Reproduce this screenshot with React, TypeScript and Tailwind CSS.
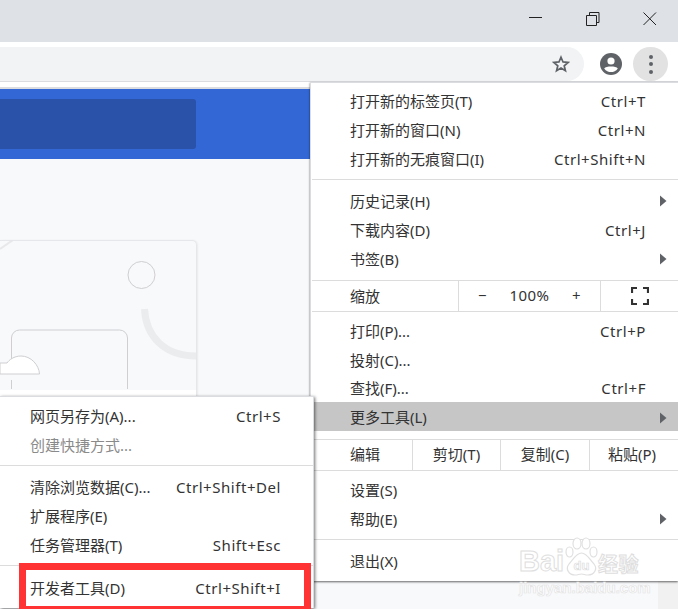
const font = "[font-family:'Noto_Sans','Noto_Sans_CJK_SC',sans-serif]";

function Arrow() {
  return (
    <svg width="7" height="12" viewBox="0 0 7 12" className="shrink-0">
      <path d="M0 0.5 L6.5 6 L0 11.5 Z" fill="#5f6368" />
    </svg>
  );
}

function Row({ label, shortcut, arrow, h = "h-[29px]", cls = "pb-[1px]" }: { label: string; shortcut?: string; arrow?: boolean; h?: string; cls?: string }) {
  return (
    <div className={`flex items-center justify-between pl-[39px] ${arrow ? "pr-[11px]" : "pr-[32px]"} ${h} ${cls}`}>
      <span>{label}</span>
      {shortcut && <span className="tracking-[0.55px]">{shortcut}</span>}
      {arrow && <Arrow />}
    </div>
  );
}

function SubRow({ label, shortcut, muted }: { label: string; shortcut?: string; muted?: boolean }) {
  return (
    <div className={`flex items-center justify-between pl-[30px] pr-[32px] pb-[3px] h-[29px] ${muted ? "text-[#8a8a8a]" : ""}`}>
      <span>{label}</span>
      {shortcut && <span className="tracking-[0.55px]">{shortcut}</span>}
    </div>
  );
}

function Sep({ cls }: { cls: string }) {
  return <div className={`h-px bg-[#dcdcdc] ml-[1px] ${cls}`} />;
}

function Watermark() {
  return (
    <div className="absolute left-[519px] top-[536px] w-[125px] h-[60px] pointer-events-none">
      <div className="flex items-end h-[40px]">
        <span className="[font-family:'Liberation_Sans',sans-serif] font-bold text-[29px] leading-[29px] w-[46px] text-white [-webkit-text-stroke:1px_#dedede]">Bai</span>
        <svg width="33" height="39" viewBox="0 0 33 39" className="shrink-0">
          <g fill="#ffffff" stroke="#e0e0e0" strokeWidth="1.2">
            <ellipse cx="4.5" cy="15" rx="3.5" ry="5" />
            <ellipse cx="12" cy="6.5" rx="4" ry="5.5" />
            <ellipse cx="21" cy="6.5" rx="4" ry="5.5" />
            <ellipse cx="28.5" cy="15" rx="3.5" ry="5" />
            <path d="M16.5 16 C22 16 25 23 29 27 C33 32 29 38 23 38 C20 38 19 37 16.5 37 C14 37 13 38 10 38 C4 38 0 32 4 27 C8 23 11 16 16.5 16 Z" />
          </g>
          <text x="16.5" y="33" textAnchor="middle" fontSize="13" fontFamily="Liberation Sans" fontWeight="700" fill="#ffffff" stroke="#dcdcdc" strokeWidth="0.7">du</text>
        </svg>
        <span className="[font-family:'Noto_Sans_CJK_SC',sans-serif] font-bold text-[20px] leading-[24px] tracking-[0.5px] text-white [-webkit-text-stroke:1px_#dedede] whitespace-nowrap">经验</span>
      </div>
      <div className="[font-family:'Liberation_Sans',sans-serif] font-bold text-[15px] leading-[16px] mt-[4px] text-white [-webkit-text-stroke:0.7px_#e4e4e4] whitespace-nowrap">jingyan.baidu.com</div>
    </div>
  );
}

export default function App() {
  return (
    <div className={`relative w-[678px] h-[609px] overflow-hidden flex flex-col bg-white text-[15px] text-[#333333] ${font}`}>
      {/* window title bar */}
      <div className="h-[42px] shrink-0 bg-[#dee1e6] flex justify-end items-start">
        <svg width="678" height="42" viewBox="0 0 678 42" className="shrink-0">
          <g fill="none" stroke="#222" strokeWidth="1">
            <path d="M529 17.5 H542" />
            <path d="M586.5 15.5 H596.5 V25.5 H586.5 Z" />
            <path d="M589.5 15 V12.5 H599 V22.5 H597" />
            <path d="M643.5 12.5 L656 25 M656 12.5 L643.5 25" />
          </g>
        </svg>
      </div>
      {/* toolbar */}
      <div className="h-[40px] shrink-0 bg-white border-b border-[#dadce0] flex items-start pt-[5px]">
        <div className="w-[584px] h-[34px] bg-[#f1f3f4] rounded-r-[17px] flex items-center justify-end pr-[14px]">
          <svg width="18" height="18" viewBox="0 0 24 24" fill="none" stroke="#5f6368" strokeWidth="2.3" strokeLinejoin="miter">
            <path d="M12 3 L14.7 9.3 L21.5 9.9 L16.3 14.4 L17.9 21 L12 17.5 L6.1 21 L7.7 14.4 L2.5 9.9 L9.3 9.3 Z" />
          </svg>
        </div>
        <div className="ml-[16px] mt-[6px] w-[22px] h-[22px] shrink-0">
          <svg width="22" height="22" viewBox="0 0 22 22">
            <circle cx="11" cy="11" r="11" fill="#5f6368" />
            <circle cx="11" cy="8" r="3.6" fill="#fff" />
            <path d="M4.2 15.4 C6 12.8 16 12.8 17.8 15.4 C16 18 13.5 19 11 19 C8.5 19 6 18 4.2 15.4 Z" fill="#fff" />
          </svg>
        </div>
        <div className="ml-[11px] w-[35px] h-[34px] rounded-full bg-[#e2e2e2] flex flex-col items-center justify-center gap-[3.5px] shrink-0">
          <span className="w-[4px] h-[4px] rounded-full bg-[#5f6368]" />
          <span className="w-[4px] h-[4px] rounded-full bg-[#5f6368]" />
          <span className="w-[4px] h-[4px] rounded-full bg-[#5f6368]" />
        </div>
      </div>
      {/* gap and hairline above the page */}
      <div className="h-[7px] shrink-0 bg-white border-b-2 border-[#dadce0]" />
      {/* page header */}
      <div className="h-[70px] shrink-0 bg-[#3367d6] pt-[10px]">
        <div className="w-[196px] h-[50px] bg-[#2a52a8] rounded-r-[3px]" />
      </div>
      {/* page body */}
      <div className="flex-1 flex bg-[#f8f9fb] min-h-0">
        <div className="flex-1 pt-[81px]">
          <div className="w-[197px] h-[170px] border-t border-r border-[#e6e7ea] rounded-tr-[5px] shadow-[1px_0_2px_rgba(0,0,0,0.06)] overflow-hidden">
            <svg width="196" height="149" viewBox="0 0 196 149" className="block">
              <path d="M0 8 L13 -1" stroke="#e8e8ea" strokeWidth="2" fill="none" />
              <circle cx="141.5" cy="34" r="13.5" fill="none" stroke="#cfcfd2" strokeWidth="1" />
              <path d="M144.5 68 C146 96 165 115 196 115" fill="none" stroke="#ebecee" strokeWidth="7" />
              <path d="M11.5 149 V98 A8 8 0 0 1 19.5 90 H119.5 A8 8 0 0 1 127.5 98 V149" fill="none" stroke="#cfcfd2" strokeWidth="1" transform="translate(0,-1)" />
              <rect x="5" y="122" width="13" height="17" fill="#f8f9fb" />
              <path d="M0 133 H39.5 C39 124 31 115 21 115 C14 115 9 119 7 122 H0 Z" fill="#ffffff" stroke="#cfcfd2" strokeWidth="1" />
            </svg>
            <div className="h-[21px] bg-white" />
          </div>
        </div>
        <div className="w-[20px] shrink-0 bg-[#f1f1f1]" />
      </div>

      {/* main dropdown */}
      <div className="absolute left-[310px] top-[82px] w-[368px] h-[499px] bg-white border-l border-t border-[#dadce0] shadow-[0_1px_2px_rgba(0,0,0,0.6)] pt-[4px]">
        <Row label="打开新的标签页(T)" shortcut="Ctrl+T" />
        <Row label="打开新的窗口(N)" shortcut="Ctrl+N" />
        <Row label="打开新的无痕窗口(I)" shortcut="Ctrl+Shift+N" />
        <Sep cls="mt-[5px] mb-[7px]" />
        <Row label="历史记录(H)" arrow />
        <Row label="下载内容(D)" shortcut="Ctrl+J" />
        <Row label="书签(B)" arrow />
        <Sep cls="mt-[6px]" />
        <div className="flex h-[30px]">
          <div className="w-[148px] border-r border-[#dcdcdc] pl-[39px] flex items-center">缩放</div>
          <div className="w-[142px] border-r border-[#dcdcdc] pb-[1px] flex items-center tracking-[0.4px]">
            <span className="w-[47px] text-center">−</span>
            <span className="w-[47px] text-center">100%</span>
            <span className="w-[47px] text-center">+</span>
          </div>
          <div className="flex-1 flex items-center justify-center">
            <svg width="18" height="18" viewBox="0 0 18 18" fill="none" stroke="#333" strokeWidth="2.2">
              <path d="M1 6 V1 H6 M12 1 H17 V6 M17 12 V17 H12 M6 17 H1 V12" />
            </svg>
          </div>
        </div>
        <Sep cls="mb-[5px]" />
        <Row label="打印(P)..." shortcut="Ctrl+P" />
        <Row label="投射(C)..." />
        <Row label="查找(F)..." shortcut="Ctrl+F" h="h-[27px]" />
        <Row label="更多工具(L)" arrow cls="bg-[#c6c6c6] pt-[2px]" />
        <Sep cls="mt-[8px]" />
        <div className="flex h-[30px]">
          <div className="w-[102px] border-r border-[#dcdcdc] pl-[39px] pb-[1px] flex items-center">编辑</div>
          <div className="w-[88px] border-r border-[#dcdcdc] pb-[1px] flex items-center justify-center">剪切(T)</div>
          <div className="w-[89px] border-r border-[#dcdcdc] pb-[1px] flex items-center justify-center">复制(C)</div>
          <div className="flex-1 flex items-center justify-center pb-[1px] pr-[4px]">粘贴(P)</div>
        </div>
        <Sep cls="mb-[5px]" />
        <Row label="设置(S)" />
        <Row label="帮助(E)" arrow />
        <Sep cls="mt-[5px] mb-[7px]" />
        <Row label="退出(X)" />
      </div>

      {/* more tools submenu */}
      <div className="absolute left-0 top-[396px] w-[314px] h-[212px] bg-white border-t border-r border-[#dadce0] shadow-[1px_1px_3px_rgba(0,0,0,0.55)] pt-[6px]">
        <SubRow label="网页另存为(A)..." shortcut="Ctrl+S" />
        <SubRow label="创建快捷方式..." muted />
        <div className="h-px bg-[#dcdcdc] mt-[4px] mb-[8px]" />
        <SubRow label="清除浏览数据(C)..." shortcut="Ctrl+Shift+Del" />
        <SubRow label="扩展程序(E)" />
        <SubRow label="任务管理器(T)" shortcut="Shift+Esc" />
        <div className="h-px bg-[#dcdcdc] mt-[4px] mb-[9px]" />
        <SubRow label="开发者工具(D)" shortcut="Ctrl+Shift+I" />
      </div>

      {/* red highlight */}
      <div className="absolute left-[19px] top-[563px] w-[292px] h-[46px] border-[7px] border-b-[3px] border-[#ff3333]" />

      <Watermark />
    </div>
  );
}
